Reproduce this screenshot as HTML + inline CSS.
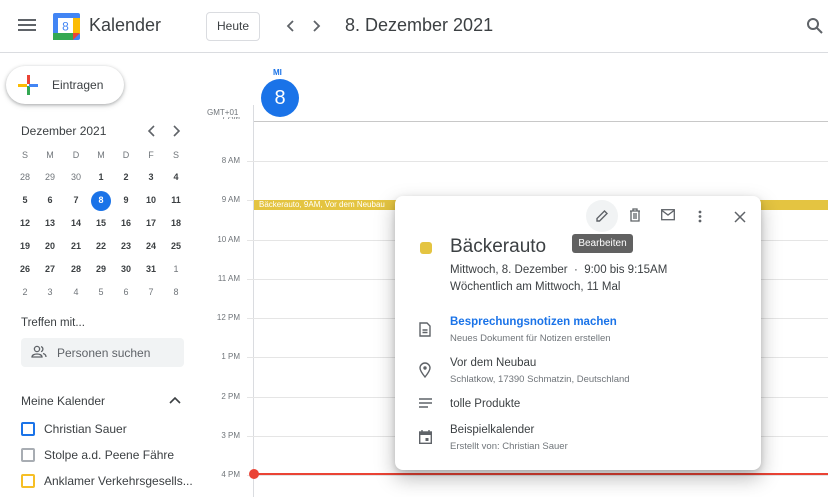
<!DOCTYPE html>
<html><head><meta charset="utf-8"><style>
*{margin:0;padding:0;box-sizing:border-box}
body{width:828px;height:497px;overflow:hidden;background:#fff;font-family:"Liberation Sans",Arial,sans-serif;color:#3c4043;position:relative}
.a{position:absolute}
.hdr{left:0;top:0;width:828px;height:53px;border-bottom:1px solid #dadce0}
.mc{width:20px;text-align:center;font-size:9px;color:#3c4043;font-weight:bold}
.mc.g{color:#70757a;font-weight:normal}
.hl{left:200px;width:40px;text-align:right;font-size:8px;color:#70757a}
.ln{left:247px;right:0;height:1px;background:#e5e5e5}
.cb{width:14px;height:14px;border:2px solid;border-radius:2px;left:21px}
.ct{left:44px;font-size:12px;color:#3c4043}
</style></head><body>
<div class="a hdr"></div>
<svg class="a" style="left:18px;top:18px" width="18" height="14"><rect y="1" width="18" height="2" fill="#5f6368"/><rect y="6" width="18" height="2" fill="#5f6368"/><rect y="11" width="18" height="2" fill="#5f6368"/></svg>
<svg class="a" style="left:53px;top:13px" width="27" height="27" viewBox="0 0 27 27">
<rect x="0" y="0" width="27" height="27" rx="2" fill="#4285f4"/>
<rect x="20" y="5" width="7" height="16" fill="#fbbc04"/>
<rect x="0" y="20" width="20" height="7" fill="#34a853"/>
<polygon points="20,20 27,20 20,27" fill="#ea4335"/>
<rect x="5" y="5" width="15" height="15" fill="#fff"/>
<text x="12.5" y="17.5" font-size="12" text-anchor="middle" fill="#4285f4" font-family="Liberation Sans">8</text></svg>
<div class="a" style="left:89px;top:15px;font-size:18px;color:#3c4043">Kalender</div>
<div class="a" style="left:206px;top:12px;width:54px;height:29px;border:1px solid #dadce0;border-radius:4px;font-size:12px;text-align:center;line-height:27px;color:#3c4043">Heute</div>
<svg class="a" style="left:284px;top:19px" width="40" height="14"><path d="M9 2 L4 7 L9 12" stroke="#5f6368" stroke-width="1.8" fill="none"/><path d="M30 2 L35 7 L30 12" stroke="#5f6368" stroke-width="1.8" fill="none"/></svg>
<div class="a" style="left:345px;top:15px;font-size:18px;color:#3c4043">8. Dezember 2021</div>
<svg class="a" style="left:806px;top:17px" width="18" height="18"><circle cx="7" cy="7" r="5" stroke="#5f6368" stroke-width="2" fill="none"/><path d="M11 11 L16 16" stroke="#5f6368" stroke-width="2"/></svg>

<div class="a" style="left:6px;top:66px;width:118px;height:38px;border-radius:19px;box-shadow:0 1px 3px rgba(60,64,67,.35),0 2px 6px rgba(60,64,67,.15);background:#fff"></div>
<svg class="a" style="left:18px;top:75px" width="20" height="20"><rect x="9" y="0" width="3" height="9" fill="#ea4335"/><rect x="9" y="11" width="3" height="9" fill="#34a853"/><rect x="0" y="9" width="9" height="3" fill="#fbbc04"/><rect x="11" y="9" width="9" height="3" fill="#4285f4"/></svg>
<div class="a" style="left:52px;top:78px;font-size:12px;color:#3c4043">Eintragen</div>

<div class="a" style="left:21px;top:124px;font-size:12px;color:#3c4043">Dezember 2021</div>
<svg class="a" style="left:146px;top:125px" width="40" height="12"><path d="M8 1 L3 6 L8 11" stroke="#5f6368" stroke-width="1.6" fill="none"/><path d="M28 1 L33 6 L28 11" stroke="#5f6368" stroke-width="1.6" fill="none"/></svg>
<div class="a" style="left:91px;top:191px;width:20px;height:20px;border-radius:50%;background:#1a73e8"></div>
<div id="mini"></div>

<div class="a" style="left:21px;top:317px;font-size:11.5px;color:#3c4043">Treffen mit...</div>
<div class="a" style="left:21px;top:338px;width:163px;height:29px;background:#f1f3f4;border-radius:4px"></div>
<svg class="a" style="left:31px;top:345px" width="16" height="14"><circle cx="6" cy="4" r="2.6" stroke="#5f6368" stroke-width="1.3" fill="none"/><path d="M1 12 C1 8 11 8 11 12 Z" stroke="#5f6368" stroke-width="1.3" fill="none"/><path d="M10 1.6 A2.6 2.6 0 0 1 10 6.6 M12 8.5 C14 9 15 10 15 12" stroke="#5f6368" stroke-width="1.3" fill="none"/></svg>
<div class="a" style="left:57px;top:346px;font-size:12px;color:#5f6368">Personen suchen</div>
<div class="a" style="left:21px;top:394px;font-size:12px;color:#3c4043">Meine Kalender</div>
<svg class="a" style="left:169px;top:396px" width="12" height="8"><path d="M1 7 L6 2 L11 7" stroke="#3c4043" stroke-width="1.6" fill="none"/></svg>
<div class="a cb" style="top:422px;border-color:#1a73e8"></div><div class="a ct" style="top:422px">Christian Sauer</div>
<div class="a cb" style="top:448px;border-color:#a8adb3"></div><div class="a ct" style="top:448px">Stolpe a.d. Peene Fähre</div>
<div class="a cb" style="top:474px;border-color:#f6bf26"></div><div class="a ct" style="top:474px">Anklamer Verkehrsgesells...</div>

<div class="a" style="left:273px;top:68px;font-size:8px;color:#1a73e8;font-weight:bold">MI</div>
<div class="a" style="left:261px;top:79px;width:38px;height:38px;border-radius:50%;background:#1a73e8;color:#fff;font-size:20px;text-align:center;line-height:38px">8</div>
<div class="a" style="left:207px;top:108px;font-size:8px;color:#70757a">GMT+01</div>
<div class="a hl" style="top:117px;height:4px;overflow:hidden;line-height:0">7 AM</div>
<div class="a" style="left:253px;top:105px;width:1px;height:392px;background:#dadce0"></div>
<div class="a" style="left:254px;top:121px;right:0;height:1px;background:#c8c8c8"></div>
<div id="hours"></div>
<div class="a" style="left:254px;top:473px;right:0;height:2px;background:#ea4335"></div>
<div class="a" style="left:249px;top:469px;width:10px;height:10px;border-radius:50%;background:#ea4335"></div>
<div class="a" style="left:254px;top:200px;right:0;height:10px;background:#e4c441;color:#fff;font-size:8px;line-height:10px;padding-left:5px;white-space:nowrap">Bäckerauto, 9AM, Vor dem Neubau</div>

<div class="a" style="left:395px;top:196px;width:366px;height:274px;background:#fff;border-radius:8px;box-shadow:0 8px 20px rgba(0,0,0,.28),0 2px 6px rgba(0,0,0,.15)"></div>
<div class="a" style="left:586px;top:200px;width:32px;height:32px;border-radius:50%;background:#f1f3f4"></div>
<svg class="a" style="left:595px;top:209px" width="14" height="14"><path d="M2 12 L2 9.5 L9.5 2 L12 4.5 L4.5 12 Z" stroke="#5f6368" stroke-width="1.4" fill="none"/></svg>
<svg class="a" style="left:629px;top:208px" width="12" height="14"><path d="M1 3 H11 M4 3 V1 H8 V3 M2 3 V13 H10 V3 M5 5 V11 M7 5 V11" stroke="#5f6368" stroke-width="1.3" fill="none"/></svg>
<svg class="a" style="left:661px;top:209px" width="14" height="12"><rect x="0.7" y="0.7" width="12.6" height="10" stroke="#5f6368" stroke-width="1.3" fill="none"/><path d="M1 1.5 L7 6 L13 1.5" stroke="#5f6368" stroke-width="1.3" fill="none"/></svg>
<svg class="a" style="left:698px;top:210px" width="4" height="13"><circle cx="2" cy="2" r="1.4" fill="#5f6368"/><circle cx="2" cy="6.5" r="1.4" fill="#5f6368"/><circle cx="2" cy="11" r="1.4" fill="#5f6368"/></svg>
<svg class="a" style="left:734px;top:211px" width="12" height="12"><path d="M1 1 L11 11 M11 1 L1 11" stroke="#5f6368" stroke-width="1.5"/></svg>
<div class="a" style="left:572px;top:234px;width:61px;height:19px;background:#616161;border-radius:3px;color:#fff;font-size:10px;text-align:center;line-height:19px">Bearbeiten</div>
<div class="a" style="left:420px;top:242px;width:12px;height:12px;border-radius:3px;background:#e4c441"></div>
<div class="a" style="left:450px;top:236px;font-size:19px;color:#3c4043">Bäckerauto</div>
<div class="a" style="left:450px;top:264px;font-size:11.5px;color:#3c4043">Mittwoch, 8. Dezember &nbsp;·&nbsp; 9:00 bis 9:15AM</div>
<div class="a" style="left:450px;top:281px;font-size:11.5px;color:#3c4043">Wöchentlich am Mittwoch, 11 Mal</div>
<svg class="a" style="left:419px;top:322px" width="12" height="15"><path d="M1 1 H8 L11 4 V14 H1 Z M3.5 8 H8.5 M3.5 10.5 H8.5" stroke="#5f6368" stroke-width="1.4" fill="none"/></svg>
<div class="a" style="left:450px;top:316px;font-size:11.5px;color:#1a73e8;font-weight:bold">Besprechungsnotizen machen</div>
<div class="a" style="left:450px;top:333px;font-size:9.5px;color:#70757a">Neues Dokument für Notizen erstellen</div>
<svg class="a" style="left:419px;top:362px" width="12" height="16"><path d="M6 15 C2 10 1 8 1 6 A5 5 0 0 1 11 6 C11 8 10 10 6 15 Z" stroke="#5f6368" stroke-width="1.4" fill="none"/><circle cx="6" cy="6" r="1.7" fill="#5f6368"/></svg>
<div class="a" style="left:450px;top:357px;font-size:11.5px;color:#3c4043">Vor dem Neubau</div>
<div class="a" style="left:450px;top:374px;font-size:9.5px;color:#70757a">Schlatkow, 17390 Schmatzin, Deutschland</div>
<svg class="a" style="left:419px;top:398px" width="13" height="10"><path d="M0 1 H13 M0 5 H13 M0 9 H9" stroke="#5f6368" stroke-width="1.4"/></svg>
<div class="a" style="left:450px;top:398px;font-size:11.5px;color:#3c4043">tolle Produkte</div>
<svg class="a" style="left:419px;top:430px" width="13" height="14"><rect x="0.7" y="2" width="11.6" height="11.3" stroke="#5f6368" stroke-width="1.4" fill="none"/><rect x="0.7" y="2" width="11.6" height="3" fill="#5f6368"/><path d="M3 0 V2 M10 0 V2" stroke="#5f6368" stroke-width="1.4"/><rect x="6.5" y="8" width="3" height="3" fill="#5f6368"/></svg>
<div class="a" style="left:450px;top:424px;font-size:11.5px;color:#3c4043">Beispielkalender</div>
<div class="a" style="left:450px;top:441px;font-size:9.5px;color:#70757a">Erstellt von: Christian Sauer</div>

<script>
var xs=[25,50,76,101,126,151,176],ys=[156,178,201,224,247,270,293];
var rows=[["S","M","D","M","D","F","S"],["28","29","30","1","2","3","4"],["5","6","7","8","9","10","11"],["12","13","14","15","16","17","18"],["19","20","21","22","23","24","25"],["26","27","28","29","30","31","1"],["2","3","4","5","6","7","8"]];
var h="";
rows.forEach(function(r,i){r.forEach(function(t,j){var g=(i==0)||(i==1&&j<3)||(i==5&&j==6)||i==6;var st="left:"+(xs[j]-10)+"px;top:"+(ys[i]-6)+"px;";if(i==2&&j==3)st+="color:#fff;";h+='<div class="a mc'+(g?' g':'')+'" style="'+st+'">'+t+'</div>';});});
document.getElementById("mini").outerHTML=h;
var L=["8 AM","9 AM","10 AM","11 AM","12 PM","1 PM","2 PM","3 PM","4 PM"],k="";
L.forEach(function(t,i){var y=Math.round(161+i*39.25);k+='<div class="a hl" style="top:'+(y-5)+'px">'+t+'</div><div class="a ln" style="top:'+y+'px"></div>';});
document.getElementById("hours").outerHTML=k;
</script>
</body></html>
